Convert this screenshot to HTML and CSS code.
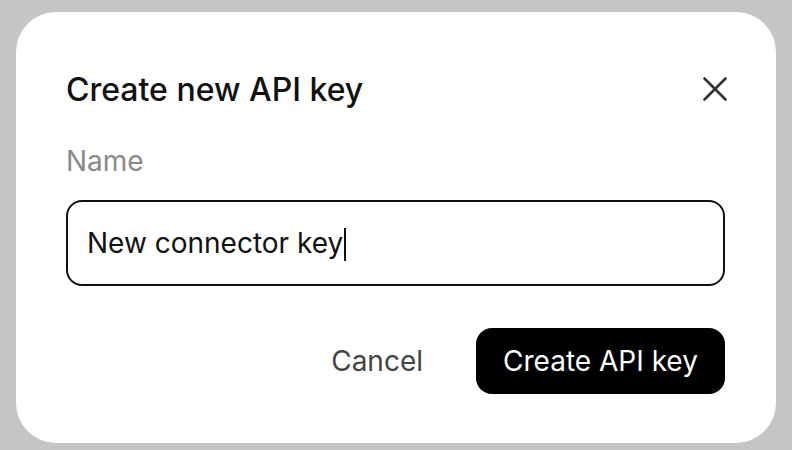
FILE: index.html
```html
<!DOCTYPE html>
<html lang="en">
<head>
<meta charset="utf-8">
<title>Create new API key</title>
<link rel="stylesheet" href="styles.css">
</head>
<body>
<div class="dialog" role="dialog" aria-labelledby="dlg-title">
  <div class="header">
    <h2 id="dlg-title" class="title">Create new API key</h2>
    <button class="close" aria-label="Close">
      <svg width="24" height="24" viewBox="0 0 24 24" fill="none" stroke="#333" stroke-width="2.6" stroke-linecap="round"><path d="M1.5 1.5 L22.5 22.5 M22.5 1.5 L1.5 22.5"/></svg>
    </button>
  </div>
  <label class="label">Name</label>
  <div class="field"><span class="value">New connector key</span><span class="caret"></span></div>
  <div class="actions">
    <button class="btn-cancel">Cancel</button>
    <button class="btn-primary">Create API key</button>
  </div>
</div>
</body>
</html>
```
FILE: styles.css
```css
html, body {
  margin: 0;
  padding: 0;
}
body {
  background: #c5c5c5;
  width: 792px;
  height: 450px;
  overflow: hidden;
  font-family: Inter, "Liberation Sans", sans-serif;
}
.dialog {
  box-sizing: border-box;
  margin: 12px 16px 0 16px;
  width: 760px;
  height: 431px;
  background: #fff;
  border-radius: 40px;
  padding: 57px 51px 0 50px;
  display: flex;
  flex-direction: column;
}
.header {
  display: flex;
  align-items: center;
  justify-content: space-between;
  height: 40px;
}
.title {
  margin: 0;
  font-size: 32px;
  font-weight: 500;
  color: #111;
}
.close {
  border: 0;
  background: none;
  padding: 0;
  width: 24px;
  height: 24px;
  margin-right: -2px;
  display: flex;
}
.label {
  margin-top: 36px;
  font-size: 28px;
  line-height: 32px;
  color: #8a8a8a;
}
.field {
  box-sizing: border-box;
  margin-top: 23px;
  height: 86px;
  border: 2px solid #111;
  border-radius: 16px;
  display: flex;
  align-items: center;
  padding-left: 19px;
  font-size: 28px;
  color: #111;
}
.caret {
  display: inline-block;
  width: 2px;
  height: 33px;
  background: #111;
  margin-left: 1px;
  margin-top: 2px;
}
.actions {
  margin-top: 42px;
  display: flex;
  justify-content: flex-end;
  align-items: center;
  gap: 27px;
}
.btn-cancel {
  border: 0;
  background: none;
  font-family: inherit;
  font-size: 28px;
  color: #444;
  padding: 0 26px;
  height: 66px;
}
.btn-primary {
  border: 0;
  background: #000;
  color: #fff;
  font-family: inherit;
  font-size: 28px;
  height: 66px;
  width: 249px;
  border-radius: 16px;
  padding: 0;
}
```
